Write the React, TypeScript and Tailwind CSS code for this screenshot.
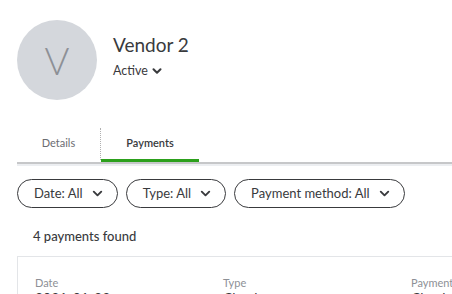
import { ChevronDown } from 'lucide-react';

const font = { fontFamily: 'Lato, "Open Sans", sans-serif' };

const Pill = ({ label }: { label: string }) => (
  <button className="flex h-[29px] items-center gap-[7px] rounded-full border border-[#393a3d] pl-[16px] pr-[12px] text-[13px] text-[#393a3d]">
    <span>{label}</span>
    <ChevronDown className="h-[15px] w-[15px]" strokeWidth={3} />
  </button>
);

const App = () => {
  return (
    <div className="h-[294px] w-[452px] overflow-hidden bg-white" style={font}>
      <div className="flex items-center pl-[17px] pt-[20px]">
        <div className="flex h-[80px] w-[80px] items-center justify-center rounded-full bg-[#d4d7dc] text-[38px] font-light text-[#8d9096]">
          V
        </div>
        <div className="ml-[16px] -mt-[8px] flex flex-col">
          <h1 className="text-[19px] leading-[26px] text-[#393a3d]">Vendor 2</h1>
          <div className="mt-[4px] flex items-center gap-[2px] text-[12.5px] text-[#393a3d]">
            <span>Active</span>
            <ChevronDown className="h-[14px] w-[14px]" strokeWidth={3.5} />
          </div>
        </div>
      </div>

      <div className="ml-[17px] mt-[26px]">
        <div className="flex h-[36px] items-stretch">
          <div className="flex w-[83px] items-center justify-center pb-[2px] text-[11px] text-[#6b6c72]">Details</div>
          <div className="my-[2px] border-l border-dotted border-[#b0b0b0]" />
          <div className="flex w-[98px] flex-col">
            <div className="flex flex-1 items-center justify-center pt-[1px] text-[11px] font-semibold text-[#393a3d]">Payments</div>
            <div className="h-[3px] bg-[#2ca01c]" />
          </div>
        </div>
        <div className="h-[2px] bg-[#c6c7c9]" />
        <div className="h-[2px] bg-[#eceef1]" />
      </div>

      <div className="ml-[17px] mt-[13px] flex gap-[8px]">
        <Pill label="Date: All" />
        <Pill label="Type: All" />
        <Pill label="Payment method: All" />
      </div>

      <div className="ml-[33px] mt-[19px] text-[13px] font-medium text-[#393a3d]">4 payments found</div>

      <div className="ml-[17px] mt-[9px] border-l border-t border-[#e3e5e8] pl-[17px] pt-[19px]">
        <div className="grid grid-cols-[188px_188px_188px]">
          {[
            ['Date', '2021-01-22'],
            ['Type', 'Check'],
            ['Payment', 'Check'],
          ].map(([k, v]) => (
            <div key={k} className="flex flex-col">
              <span className="text-[11px] leading-[14px] text-[#8d9096]">{k}</span>
              <span className="text-[14px] leading-[16px] text-[#393a3d]">{v}</span>
            </div>
          ))}
        </div>
      </div>
    </div>
  );
};

export default App;
